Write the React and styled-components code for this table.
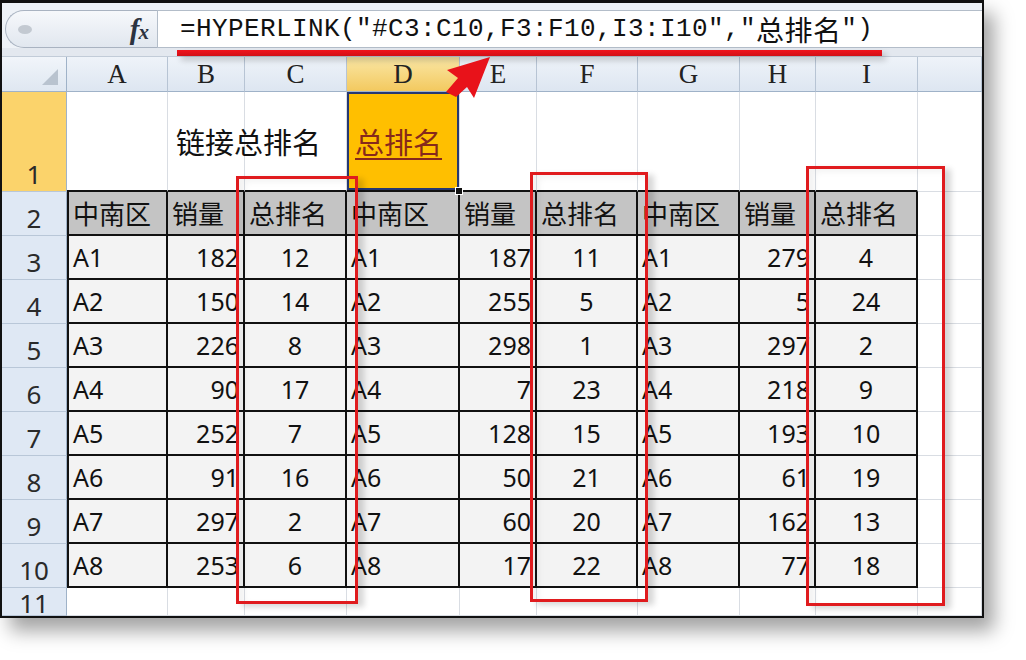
import React from 'react';
import styled, { createGlobalStyle, css } from 'styled-components';

const Global = createGlobalStyle`
  html, body { margin: 0; padding: 0; background: #fff; }
  body { font-family: "Noto Sans", "Noto Sans CJK SC", sans-serif; }
`;

const Stage = styled.div`
  position: relative;
  width: 1026px;
  height: 660px;
  overflow: hidden;
  background: #fff;
`;

const Window = styled.div`
  width: 984px;
  height: 618px;
  box-sizing: border-box;
  border: 2px solid #111;
  border-top-width: 3px;
  box-shadow: 10px 13px 18px rgba(0, 0, 0, 0.36);
  background: #fff;
  display: flex;
  flex-direction: column;
  overflow: hidden;
`;

const TopStrip = styled.div`
  height: 7px;
  background: #eef2f7;
  flex: none;
`;

const FormulaBar = styled.div`
  height: 38px;
  flex: none;
  display: flex;
  background: #eef2f7;
`;

const NameBox = styled.div`
  width: 152px;
  margin-left: 3px;
  box-sizing: border-box;
  border: 1px solid #a9b3c1;
  border-right: none;
  border-radius: 19px 0 0 19px;
  background: linear-gradient(#f6f8fb, #e1e7ef);
  display: flex;
  align-items: center;
  justify-content: space-between;
  padding: 0 9px 0 12px;
`;

const Blob = styled.span`
  width: 14px;
  height: 9px;
  border-radius: 50%;
  background: #c3c9d1;
`;

const FxLabel = styled.span`
  font-family: "Liberation Serif", serif;
  font-style: italic;
  font-weight: bold;
  font-size: 29px;
  color: #2c3340;
  letter-spacing: -1px;
  line-height: 1;
  sub { font-size: 21px; vertical-align: baseline; }
`;

const FormulaInput = styled.div`
  flex: 1;
  box-sizing: border-box;
  background: #fff;
  border: 1px solid #b3bdc9;
  border-right: none;
  display: flex;
  align-items: center;
  padding-left: 22px;
  font-family: "Liberation Mono", "Noto Sans CJK SC", monospace;
  font-size: 26px;
  letter-spacing: 0.4px;
  color: #111;
  white-space: nowrap;
`;

const CjkPart = styled.span`
  font-family: "Noto Sans CJK SC", sans-serif;
  font-size: 28px;
`;

const GapStrip = styled.div`
  height: 9px;
  flex: none;
  background: #e3e8ef;
  border-bottom: 1px solid #c2ccd8;
  box-sizing: border-box;
`;

const Sheet = styled.div`
  display: grid;
  grid-template-columns: 65px 101px 77px 102px 113px 77px 101px 102px 76px 102px 1fr;
  grid-template-rows: 35px 100px repeat(9, 44px) 28px;
  background: #fff;
`;

const Corner = styled.div`
  box-sizing: border-box;
  background: linear-gradient(#f1f5fa, #dfe7f1);
  border-right: 1px solid #9fb2c8;
  border-bottom: 1px solid #9fb2c8;
  display: flex;
  align-items: flex-end;
  justify-content: flex-end;
  padding: 0 8px 6px 0;
`;

const CornerTri = styled.span`
  width: 0;
  height: 0;
  border-left: 16px solid transparent;
  border-bottom: 16px solid #b9c3cf;
`;

const ColHeader = styled.div`
  box-sizing: border-box;
  display: flex;
  align-items: center;
  justify-content: center;
  font-family: "Liberation Serif", serif;
  font-size: 27px;
  color: #222;
  border-right: 1px solid #b7c4d4;
  border-bottom: 1px solid #9fb2c8;
  background: ${(p) =>
    p.$active
      ? 'linear-gradient(#fae7a6, #f3c95f)'
      : 'linear-gradient(#eef3f9, #dde6f1)'};
`;

const RowHeader = styled.div`
  box-sizing: border-box;
  display: flex;
  align-items: ${(p) => (p.$clip ? 'flex-start' : 'flex-end')};
  justify-content: center;
  padding-bottom: 1px;
  overflow: hidden;
  font-family: "Noto Sans", sans-serif;
  font-size: 26px;
  line-height: 1.2;
  color: #2a2a2a;
  border-right: 1px solid #9fb2c8;
  border-bottom: 1px solid #b9c7d8;
  background: ${(p) => (p.$active ? '#fbd36b' : '#dfe8f4')};
`;

const Cell = styled.div`
  box-sizing: border-box;
  position: relative;
  display: flex;
  align-items: center;
  justify-content: ${(p) =>
    p.$align === 'right' ? 'flex-end' : p.$align === 'center' ? 'center' : 'flex-start'};
  padding: 0 4px 0 4px;
  white-space: nowrap;
  font-size: 25px;
  color: #111;
  border-right: 1px solid #d9dde3;
  border-bottom: 1px solid #d9dde3;
  ${(p) => p.$topEdge && css`border-bottom: 2px solid #111;`}
  ${(p) =>
    p.$table &&
    css`
      border-right: 2px solid #111;
      border-bottom: 2px solid #111;
      background: ${p.$head ? '#c4c4c4' : '#f3f3f3'};
      font-size: ${p.$head ? '26px' : '25px'};
    `}
  ${(p) => p.$first && css`border-left: 2px solid #111;`}
  ${(p) =>
    p.$sel &&
    css`
      background: #ffbf00;
      box-shadow: inset 0 0 0 2px #263872;
    `}
`;

const Title = styled.span`
  font-size: 29px;
  padding-left: 4px;
  color: ${(p) => (p.$link ? '#86291c' : '#111')};
  text-decoration: ${(p) => (p.$link ? 'underline' : 'none')};
  text-decoration-thickness: 2px;
  text-underline-offset: 4px;
`;

const FillHandle = styled.span`
  position: absolute;
  right: -4px;
  bottom: -5px;
  width: 6px;
  height: 6px;
  background: #111;
  border: 1px solid #fff;
  z-index: 2;
`;

const RedBox = styled.div`
  position: absolute;
  box-sizing: border-box;
  border: 3px solid #e01b1e;
  box-shadow: 6px 3px 6px rgba(0, 0, 0, 0.16), inset 6px 3px 6px rgba(0, 0, 0, 0.05);
  pointer-events: none;
`;

const Underline = styled.div`
  position: absolute;
  left: 177px;
  top: 50px;
  width: 705px;
  height: 6px;
  background: linear-gradient(#f0141c, #d20f15);
  box-shadow: 4px 4px 6px rgba(0, 0, 0, 0.22);
`;

const Arrow = styled.svg`
  position: absolute;
  left: 436px;
  top: 50px;
  overflow: visible;
`;

const COLS = ['A', 'B', 'C', 'D', 'E', 'F', 'G', 'H', 'I', ''];
const HEAD = ['中南区', '销量', '总排名', '中南区', '销量', '总排名', '中南区', '销量', '总排名'];
const DATA = [
  ['A1', 182, 12, 'A1', 187, 11, 'A1', 279, 4],
  ['A2', 150, 14, 'A2', 255, 5, 'A2', 5, 24],
  ['A3', 226, 8, 'A3', 298, 1, 'A3', 297, 2],
  ['A4', 90, 17, 'A4', 7, 23, 'A4', 218, 9],
  ['A5', 252, 7, 'A5', 128, 15, 'A5', 193, 10],
  ['A6', 91, 16, 'A6', 50, 21, 'A6', 61, 19],
  ['A7', 297, 2, 'A7', 60, 20, 'A7', 162, 13],
  ['A8', 253, 6, 'A8', 17, 22, 'A8', 77, 18],
];
const ALIGN = ['left', 'right', 'center'];

export default function App() {
  const cells = [];
  cells.push(
    <Corner key="corner">
      <CornerTri />
    </Corner>
  );
  COLS.forEach((c, i) =>
    cells.push(
      <ColHeader key={'h' + i} $active={c === 'D'}>
        {c}
      </ColHeader>
    )
  );
  cells.push(
    <RowHeader key="r1" $active>
      1
    </RowHeader>
  );
  COLS.forEach((c, i) => {
    const edge = i < 9;
    if (c === 'B')
      cells.push(
        <Cell key="1B" $topEdge={edge}>
          <Title>链接总排名</Title>
        </Cell>
      );
    else if (c === 'D')
      cells.push(
        <Cell key="1D" $topEdge={edge} $sel>
          <Title $link>总排名</Title>
          <FillHandle />
        </Cell>
      );
    else cells.push(<Cell key={'1' + i} $topEdge={edge} />);
  });
  cells.push(<RowHeader key="r2">2</RowHeader>);
  HEAD.forEach((t, i) =>
    cells.push(
      <Cell key={'2' + i} $table $head $first={i === 0}>
        {t}
      </Cell>
    )
  );
  cells.push(<Cell key="2J" />);
  DATA.forEach((row, r) => {
    cells.push(<RowHeader key={'r' + (r + 3)}>{r + 3}</RowHeader>);
    row.forEach((v, i) =>
      cells.push(
        <Cell key={r + '-' + i} $table $first={i === 0} $align={ALIGN[i % 3]}>
          {v}
        </Cell>
      )
    );
    cells.push(<Cell key={r + '-J'} />);
  });
  cells.push(
    <RowHeader key="r11" $clip>
      11
    </RowHeader>
  );
  COLS.forEach((c, i) => cells.push(<Cell key={'11' + i} />));

  return (
    <Stage>
      <Global />
      <Window>
        <TopStrip />
        <FormulaBar>
          <NameBox>
            <Blob />
            <FxLabel>
              f<sub>x</sub>
            </FxLabel>
          </NameBox>
          <FormulaInput>
            =HYPERLINK(″#C3:C10,F3:F10,I3:I10″,″<CjkPart>总排名</CjkPart>″)
          </FormulaInput>
        </FormulaBar>
        <GapStrip />
        <Sheet>{cells}</Sheet>
      </Window>
      <RedBox style={{ left: 236, top: 176, width: 122, height: 428 }} />
      <RedBox style={{ left: 530, top: 172, width: 118, height: 430 }} />
      <RedBox style={{ left: 806, top: 166, width: 139, height: 440 }} />
      <Underline />
      <Arrow width="60" height="52" viewBox="0 0 60 52">
        <polygon points="54,7 11,20 22,28 10,42 20,47 31,37 38,48" fill="#e8121a" />
      </Arrow>
    </Stage>
  );
}
